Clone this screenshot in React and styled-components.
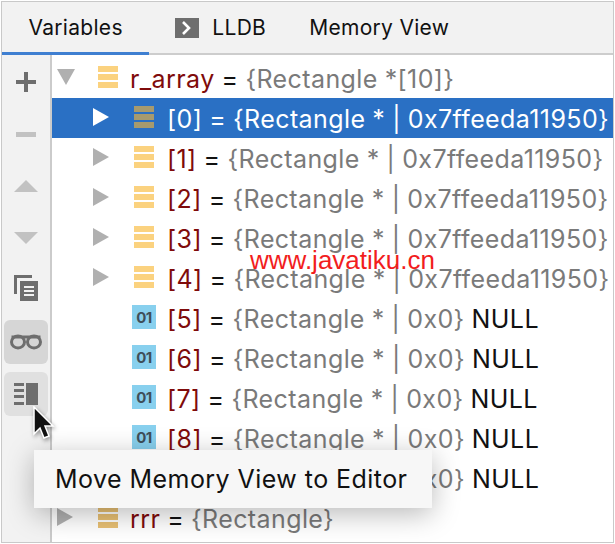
import React from 'react';
import styled, { createGlobalStyle } from 'styled-components';

const GlobalStyle = createGlobalStyle`
  html, body {
    margin: 0;
    padding: 0;
    background: #fff;
  }
`;

const Frame = styled.div`
  position: relative;
  width: 615px;
  height: 544px;
  box-sizing: border-box;
  padding: 1px;
  overflow: hidden;
  font-family: Inter, "Liberation Sans", sans-serif;
`;

const Panel = styled.div`
  height: 100%;
  box-sizing: border-box;
  border: 1px solid #c9c9c9;
  display: flex;
  flex-direction: column;
  background: #fff;
`;

const TabBar = styled.div`
  flex: none;
  height: 53px;
  box-sizing: border-box;
  display: flex;
  background: #f2f2f2;
  border-bottom: 2px solid #cdcdcd;
`;

const Tab = styled.div`
  display: flex;
  align-items: center;
  gap: 13px;
  height: 53px;
  box-sizing: border-box;
  padding: 1px ${(p) => p.$pad}px 0;
  font-size: 21px;
  letter-spacing: 0.3px;
  color: #111;
  border-bottom: 3px solid ${(p) => (p.$active ? '#3f7fd1' : 'transparent')};
`;

const Body = styled.div`
  flex: 1;
  display: flex;
  min-height: 0;
`;

const Sidebar = styled.div`
  flex: none;
  width: 50px;
  box-sizing: border-box;
  padding: 5px 0 0 2px;
  display: flex;
  flex-direction: column;
  gap: 8px;
  background: #f2f2f2;
  border-right: 2px solid #cbcbcb;
`;

const ToolButton = styled.div`
  width: 44px;
  height: 44px;
  border-radius: 6px;
  display: flex;
  align-items: center;
  justify-content: center;
  background: ${(p) => p.$tone || 'transparent'};
`;

const Tree = styled.div`
  flex: 1;
  min-width: 0;
  padding-top: 3px;
  overflow: hidden;
`;

const Row = styled.div`
  height: 40px;
  display: flex;
  align-items: center;
  white-space: nowrap;
  font-size: 25px;
  letter-spacing: 0.4px;
  word-spacing: -0.5px;
  padding-left: ${(p) => p.$indent}px;
  background: ${(p) => (p.$selected ? '#2a70c4' : 'transparent')};
  color: ${(p) => (p.$selected ? '#fff' : '#111')};
`;

const ArrowSlot = styled.span`
  flex: none;
  width: ${(p) => p.$width}px;
  margin-bottom: 2px;
  display: flex;
  align-items: center;
`;

const IconSlot = styled.span`
  flex: none;
  width: ${(p) => p.$width}px;
  margin-bottom: 2px;
  padding-left: ${(p) => p.$pad}px;
  box-sizing: border-box;
  display: flex;
  align-items: center;
`;

const RowText = styled.span`
  margin-top: 2px;
`;

const Name = styled.span`
  color: ${(p) => (p.$selected ? '#fff' : '#7f0b0b')};
`;

const Value = styled.span`
  color: ${(p) => (p.$selected ? '#fff' : '#7a7a7a')};
`;

const Watermark = styled.div`
  position: absolute;
  left: 250px;
  top: 245px;
  font-family: "Liberation Sans", Arial, sans-serif;
  font-size: 26px;
  color: #f21d1d;
  pointer-events: none;
`;

const Tip = styled.div`
  position: absolute;
  left: 34px;
  top: 450px;
  width: 398px;
  height: 58px;
  box-sizing: border-box;
  padding-left: 21px;
  display: flex;
  align-items: center;
  background: #f7f7f7;
  box-shadow: 0 6px 28px rgba(0, 0, 0, 0.28);
  font-size: 25px;
  letter-spacing: 0.45px;
  color: #111;
`;

const Cursor = styled.svg`
  position: absolute;
  left: 30px;
  top: 406px;
  filter: drop-shadow(1px 2px 2px rgba(0, 0, 0, 0.4));
`;

const IntIcon = styled.span`
  width: 24px;
  height: 24px;
  display: flex;
  align-items: center;
  justify-content: center;
  background: #88d0ee;
  color: #3f4f5a;
  font-size: 15px;
  font-weight: 700;
  letter-spacing: -0.5px;
`;

const Arrow = ({ open, color = '#b0b0b0' }) => (
  <svg width="18" height="18" viewBox="0 0 18 18" style={{ display: 'block' }}>
    {open ? (
      <path d="M0 1h18L9 17z" fill={color} />
    ) : (
      <path d="M0 0l16 9-16 9z" fill={color} />
    )}
  </svg>
);

const ArrayIcon = ({ color = '#fbd27f' }) => (
  <svg width="20" height="22" viewBox="0 0 20 22" style={{ display: 'block' }}>
    <rect y="0" width="20" height="6" fill={color} />
    <rect y="8" width="20" height="6" fill={color} />
    <rect y="16" width="20" height="6" fill={color} />
  </svg>
);

const TerminalIcon = () => (
  <svg width="24" height="20" viewBox="0 0 24 20">
    <rect width="24" height="20" fill="#6e6e6e" />
    <path d="M8 4l6 6-6 6" fill="none" stroke="#fff" strokeWidth="2.6" />
  </svg>
);

const PlusIcon = () => (
  <svg width="20" height="20" viewBox="0 0 20 20">
    <path d="M8 0h4v8h8v4h-8v8H8v-8H0V8h8z" fill="#6e6e6e" />
  </svg>
);

const MinusIcon = () => (
  <svg width="20" height="5" viewBox="0 0 20 5">
    <rect width="20" height="5" fill="#c2c2c2" />
  </svg>
);

const UpIcon = () => (
  <svg width="24" height="12" viewBox="0 0 24 12">
    <path d="M12 0l12 12H0z" fill="#c2c2c2" />
  </svg>
);

const DownIcon = () => (
  <svg width="24" height="12" viewBox="0 0 24 12">
    <path d="M0 0h24L12 12z" fill="#c2c2c2" />
  </svg>
);

const CopyIcon = () => (
  <svg width="24" height="26" viewBox="0 0 24 26" style={{ marginTop: -4 }}>
    <path d="M0 0h18v3H3v16H0z" fill="#6e6e6e" />
    <path fillRule="evenodd" d="M6 6h18v20H6zM10 11v2h10v-2zM10 15v2h10v-2zM10 19v2h10v-2z" fill="#6e6e6e" />
  </svg>
);

const GlassesIcon = () => (
  <svg width="32" height="16" viewBox="0 0 32 16">
    <g fill="none" stroke="#6e6e6e" strokeWidth="3">
      <ellipse cx="8" cy="8" rx="6.5" ry="6" />
      <ellipse cx="24" cy="8" rx="6.5" ry="6" />
      <path d="M1.5 3h29" />
    </g>
  </svg>
);

const MemoryIcon = () => (
  <svg width="24" height="22" viewBox="0 0 24 22">
    <g fill="#6e6e6e">
      <rect x="0" y="0" width="10" height="3" />
      <rect x="0" y="6" width="10" height="3" />
      <rect x="0" y="12" width="10" height="3" />
      <rect x="0" y="19" width="10" height="3" />
      <rect x="12" y="0" width="12" height="22" />
    </g>
  </svg>
);

const rows = [
  { id: 0, kind: 'array', value: 'Rectangle * | 0x7ffeeda11950', selected: true },
  { id: 1, kind: 'array', value: 'Rectangle * | 0x7ffeeda11950' },
  { id: 2, kind: 'array', value: 'Rectangle * | 0x7ffeeda11950' },
  { id: 3, kind: 'array', value: 'Rectangle * | 0x7ffeeda11950' },
  { id: 4, kind: 'array', value: 'Rectangle * | 0x7ffeeda11950' },
  { id: 5, kind: 'int', value: 'Rectangle * | 0x0' },
  { id: 6, kind: 'int', value: 'Rectangle * | 0x0' },
  { id: 7, kind: 'int', value: 'Rectangle * | 0x0' },
  { id: 8, kind: 'int', value: 'Rectangle * | 0x0' },
  { id: 9, kind: 'int', value: 'Rectangle * | 0x0' },
];

const App = () => (
  <Frame>
    <GlobalStyle />
    <Panel>
      <TabBar>
        <Tab $active $pad={26.5}>Variables</Tab>
        <Tab $pad={26}>
          <TerminalIcon />
          LLDB
        </Tab>
        <Tab $pad={17}>Memory View</Tab>
      </TabBar>
      <Body>
        <Sidebar>
          <ToolButton><PlusIcon /></ToolButton>
          <ToolButton><MinusIcon /></ToolButton>
          <ToolButton><UpIcon /></ToolButton>
          <ToolButton><DownIcon /></ToolButton>
          <ToolButton><CopyIcon /></ToolButton>
          <ToolButton $tone="#d6d6d6"><GlassesIcon /></ToolButton>
          <ToolButton $tone="#e0e0e0"><MemoryIcon /></ToolButton>
        </Sidebar>
        <Tree>
          <Row $indent={5}>
            <ArrowSlot $width={41}><Arrow open /></ArrowSlot>
            <IconSlot $width={32} $pad={0}><ArrayIcon /></IconSlot>
            <RowText>
              <Name>r_array</Name> = <Value>{'{Rectangle *[10]}'}</Value>
            </RowText>
          </Row>
          {rows.map((r) => (
            <Row key={r.id} $indent={41} $selected={r.selected}>
              <ArrowSlot $width={39}>
                {r.kind === 'array' && <Arrow color={r.selected ? '#fff' : '#b0b0b0'} />}
              </ArrowSlot>
              <IconSlot $width={35} $pad={r.kind === 'array' ? 2 : 0}>
                {r.kind === 'array' ? (
                  <ArrayIcon color={r.selected ? '#a69a6e' : '#fbd27f'} />
                ) : (
                  <IntIcon>01</IntIcon>
                )}
              </IconSlot>
              <RowText>
                <Name $selected={r.selected}>[{r.id}]</Name> ={' '}
                <Value $selected={r.selected}>{`{${r.value}}`}</Value>
                {r.kind === 'int' && ' NULL'}
              </RowText>
            </Row>
          ))}
          <Row $indent={5}>
            <ArrowSlot $width={41}><Arrow /></ArrowSlot>
            <IconSlot $width={32} $pad={0}><ArrayIcon color="#e8c074" /></IconSlot>
            <RowText>
              <Name>rrr</Name> = <Value>{'{Rectangle}'}</Value>
            </RowText>
          </Row>
        </Tree>
      </Body>
    </Panel>
    <Watermark>www.javatiku.cn</Watermark>
    <Tip>Move Memory View to Editor</Tip>
    <Cursor width="26" height="36" viewBox="0 0 26 36">
      <path d="M4 1v27l6-6 4 10 5-2-4-10h8z" fill="#111" stroke="#fff" strokeWidth="1.5" />
    </Cursor>
  </Frame>
);

export default App;
